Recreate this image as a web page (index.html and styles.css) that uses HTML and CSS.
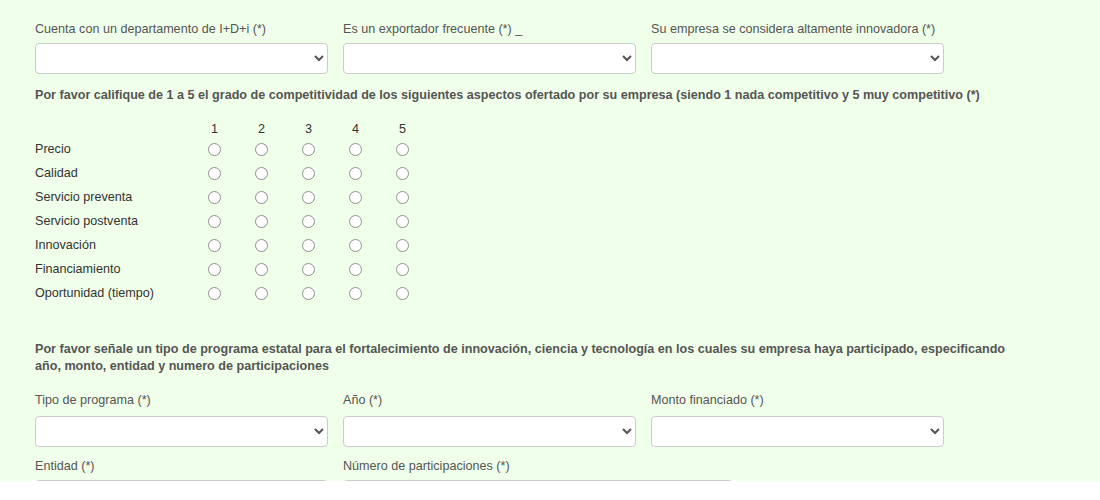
FILE: index.html
```html
<!DOCTYPE html>
<html lang="es">
<head>
<meta charset="utf-8">
<link rel="stylesheet" href="styles.css">
</head>
<body>
<div class="page">
  <form class="form">
    <div class="row row-first">
      <div class="field">
        <label class="lbl">Cuenta con un departamento de I+D+i (*)</label>
        <select class="sel"><option></option></select>
      </div>
      <div class="field">
        <label class="lbl">Es un exportador frecuente (*) _</label>
        <select class="sel"><option></option></select>
      </div>
      <div class="field">
        <label class="lbl">Su empresa se considera altamente innovadora (*)</label>
        <select class="sel"><option></option></select>
      </div>
    </div>

    <p class="note note-one">Por favor califique de 1 a 5 el grado de competitividad de los siguientes aspectos ofertado por su empresa (siendo 1 nada competitivo y 5 muy competitivo (*)</p>

    <div class="matrix">
      <div class="mhead"></div><div class="mhead">1</div><div class="mhead">2</div><div class="mhead">3</div><div class="mhead">4</div><div class="mhead">5</div>

      <div class="mlabel">Precio</div>
      <div class="mcell"><input type="radio" name="r1"></div><div class="mcell"><input type="radio" name="r1"></div><div class="mcell"><input type="radio" name="r1"></div><div class="mcell"><input type="radio" name="r1"></div><div class="mcell"><input type="radio" name="r1"></div>

      <div class="mlabel">Calidad</div>
      <div class="mcell"><input type="radio" name="r2"></div><div class="mcell"><input type="radio" name="r2"></div><div class="mcell"><input type="radio" name="r2"></div><div class="mcell"><input type="radio" name="r2"></div><div class="mcell"><input type="radio" name="r2"></div>

      <div class="mlabel">Servicio preventa</div>
      <div class="mcell"><input type="radio" name="r3"></div><div class="mcell"><input type="radio" name="r3"></div><div class="mcell"><input type="radio" name="r3"></div><div class="mcell"><input type="radio" name="r3"></div><div class="mcell"><input type="radio" name="r3"></div>

      <div class="mlabel">Servicio postventa</div>
      <div class="mcell"><input type="radio" name="r4"></div><div class="mcell"><input type="radio" name="r4"></div><div class="mcell"><input type="radio" name="r4"></div><div class="mcell"><input type="radio" name="r4"></div><div class="mcell"><input type="radio" name="r4"></div>

      <div class="mlabel">Innovación</div>
      <div class="mcell"><input type="radio" name="r5"></div><div class="mcell"><input type="radio" name="r5"></div><div class="mcell"><input type="radio" name="r5"></div><div class="mcell"><input type="radio" name="r5"></div><div class="mcell"><input type="radio" name="r5"></div>

      <div class="mlabel">Financiamiento</div>
      <div class="mcell"><input type="radio" name="r6"></div><div class="mcell"><input type="radio" name="r6"></div><div class="mcell"><input type="radio" name="r6"></div><div class="mcell"><input type="radio" name="r6"></div><div class="mcell"><input type="radio" name="r6"></div>

      <div class="mlabel">Oportunidad (tiempo)</div>
      <div class="mcell"><input type="radio" name="r7"></div><div class="mcell"><input type="radio" name="r7"></div><div class="mcell"><input type="radio" name="r7"></div><div class="mcell"><input type="radio" name="r7"></div><div class="mcell"><input type="radio" name="r7"></div>
    </div>

    <p class="note note-two">Por favor señale un tipo de programa estatal para el fortalecimiento de innovación, ciencia y tecnología en los cuales su empresa haya participado, especificando año, monto, entidad y numero de participaciones</p>

    <div class="row row-second">
      <div class="field">
        <label class="lbl">Tipo de programa (*)</label>
        <select class="sel"><option></option></select>
      </div>
      <div class="field">
        <label class="lbl">Año (*)</label>
        <select class="sel"><option></option></select>
      </div>
      <div class="field">
        <label class="lbl">Monto financiado (*)</label>
        <select class="sel"><option></option></select>
      </div>
    </div>

    <div class="row row-third">
      <div class="field">
        <label class="lbl">Entidad (*)</label>
        <select class="sel"><option></option></select>
      </div>
      <div class="field">
        <label class="lbl">Número de participaciones (*)</label>
        <input class="sel txt" type="text">
      </div>
    </div>
  </form>
</div>
</body>
</html>
```

FILE: styles.css
```css
html, body {
  margin: 0;
  padding: 0;
  background: #ffffff;
}

.page {
  height: 481px;
  overflow: hidden;
  background: #f0ffe9;
  font-family: "Liberation Sans", Arial, sans-serif;
  color: #555555;
}

.form {
  padding: 19px 0 0 35px;
}

.row {
  display: grid;
  grid-template-columns: 293px 293px 293px;
  column-gap: 15px;
}

.row-third {
  grid-template-columns: 293px 390px;
}

.field {
  display: flex;
  flex-direction: column;
}

.lbl {
  font-size: 12.6px;
  line-height: 20px;
  color: #555555;
  white-space: nowrap;
}

.row-first .lbl { margin-bottom: 4px; }
.row-second .lbl { margin-bottom: 6px; }
.row-third .lbl { margin-bottom: 4px; }

.row-second { margin-top: 15px; }
.row-third { margin-top: 9px; }

.sel {
  box-sizing: border-box;
  width: 100%;
  height: 31px;
  margin: 0;
  border: 1px solid #cccccc;
  border-radius: 4px;
  background: #ffffff;
  font-family: inherit;
  font-size: 14px;
  color: #555555;
}

.txt {
  padding: 0 8px;
}

.note {
  margin: 0;
  width: 980px;
  font-size: 12.6px;
  line-height: 17px;
  font-weight: bold;
  color: #555555;
}

.note-one {
  margin-top: 13px;
}

.note-two {
  margin-top: 36px;
}

.matrix {
  margin-top: 17px;
  display: grid;
  grid-template-columns: 156px repeat(5, 47px);
  grid-template-rows: 16px repeat(7, 24px);
  color: #333333;
  font-size: 12.6px;
}

.mhead {
  line-height: 16px;
  text-align: center;
}

.mlabel {
  display: flex;
  align-items: center;
}

.mcell {
  display: flex;
  align-items: center;
  justify-content: center;
}

.mcell input {
  appearance: none;
  -webkit-appearance: none;
  box-sizing: border-box;
  margin: 0;
  width: 13px;
  height: 13px;
  border: 1px solid #8f8f8f;
  border-radius: 50%;
  background: #ffffff;
}
```
